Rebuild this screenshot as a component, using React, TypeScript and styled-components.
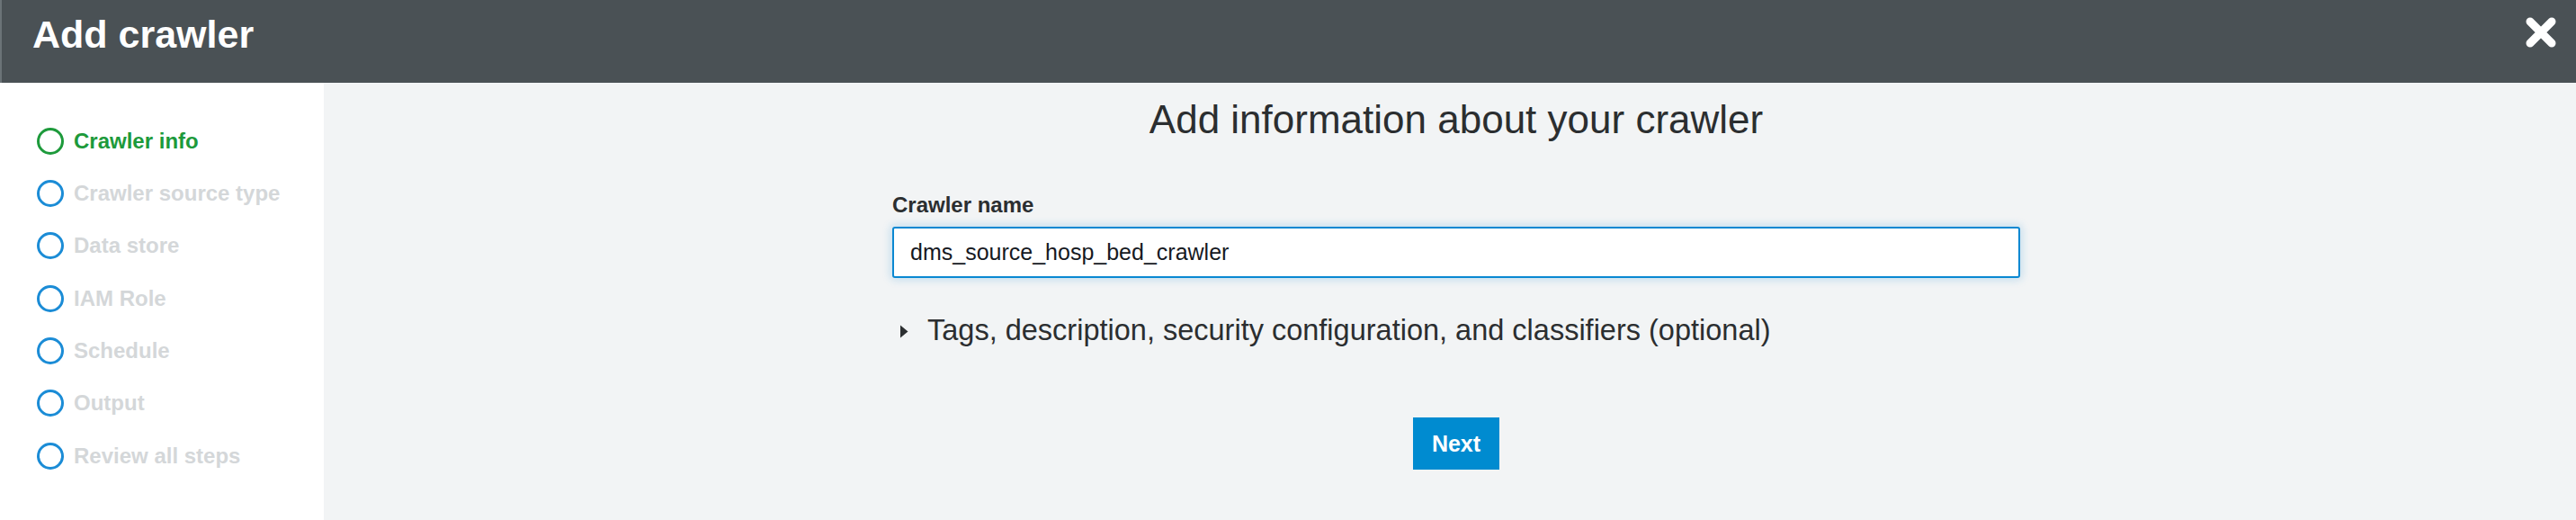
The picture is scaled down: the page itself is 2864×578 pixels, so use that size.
import React from "react";
import styled, { createGlobalStyle } from "styled-components";

const Global = createGlobalStyle`
  html, body { margin: 0; padding: 0; }
  body {
    font-family: "Liberation Sans", Arial, Helvetica, sans-serif;
    background: #ffffff;
  }
  * { box-sizing: border-box; }
`;

const Page = styled.div`
  display: flex;
  flex-direction: column;
  width: 2864px;
  height: 578px;
  overflow: hidden;
`;

const Header = styled.header`
  flex: 0 0 92px;
  height: 92px;
  display: flex;
  align-items: flex-start;
  justify-content: space-between;
  background: #4a5155;
  border-left: 2px solid #6b7377;
  padding: 13px 22px 0 34px;
`;

const HeaderTitle = styled.h1`
  margin: 0;
  font-size: 43px;
  line-height: 50px;
  font-weight: 700;
  color: #ffffff;
  letter-spacing: 0;
`;

const CloseButton = styled.button`
  margin-top: 6px;
  width: 34px;
  height: 34px;
  padding: 0;
  border: 0;
  background: transparent;
  display: flex;
  cursor: pointer;
`;

const Body = styled.div`
  flex: 1;
  display: flex;
  min-height: 0;
`;

const Sidebar = styled.nav`
  flex: 0 0 360px;
  background: #ffffff;
  display: flex;
  flex-direction: column;
  padding: 35.5px 0 0 41px;
`;

const Step = styled.div<{ $active?: boolean }>`
  height: 58.33px;
  display: flex;
  align-items: center;
  gap: 11px;
  font-size: 24px;
  font-weight: 700;
  color: ${(p) => (p.$active ? "#1d9a3b" : "#d4d7d9")};
  white-space: nowrap;
`;

const StepCircle = styled.span<{ $active?: boolean }>`
  flex: 0 0 30px;
  width: 30px;
  height: 30px;
  border-radius: 50%;
  border: 3px solid ${(p) => (p.$active ? "#1d9a3b" : "#1b8cd6")};
`;

const Main = styled.main`
  flex: 1;
  background: #f2f4f5;
  display: flex;
  flex-direction: column;
  align-items: center;
  padding: 15px 0 0 14px;
`;

const PageTitle = styled.h2`
  margin: 0;
  font-size: 44px;
  line-height: 52px;
  font-weight: 400;
  color: #2b2e30;
  text-align: center;
`;

const Form = styled.div`
  width: 1254px;
  display: flex;
  flex-direction: column;
  margin-top: 55px;
`;

const Label = styled.label`
  font-size: 24px;
  line-height: 28px;
  font-weight: 700;
  color: #2b2e30;
`;

const TextInput = styled.input`
  margin-top: 10px;
  height: 57px;
  width: 100%;
  border: 2px solid #0a88d2;
  border-radius: 3px;
  background: #ffffff;
  padding: 0 0 0 18px;
  font-family: "Liberation Sans", Arial, Helvetica, sans-serif;
  font-size: 25px;
  color: #16191f;
  outline: none;
  box-shadow: 0 0 10px 2px rgba(27, 139, 214, 0.22);
`;

const Expander = styled.div`
  margin-top: 38px;
  display: flex;
  align-items: center;
  gap: 21px;
  padding-left: 8px;
  font-size: 32.5px;
  line-height: 40px;
  color: #2b2e30;
  cursor: pointer;
`;

const Caret = styled.svg`
  flex: 0 0 10px;
  width: 10px;
  height: 15px;
  margin-top: 2px;
`;

const Actions = styled.div`
  display: flex;
  justify-content: center;
  margin-top: 77px;
`;

const PrimaryButton = styled.button`
  width: 96px;
  height: 58px;
  border: 0;
  border-radius: 0;
  background: #008bd0;
  color: #ffffff;
  font-family: "Liberation Sans", Arial, Helvetica, sans-serif;
  font-size: 25px;
  font-weight: 700;
  padding: 0;
  cursor: pointer;
`;

const steps = [
  "Crawler info",
  "Crawler source type",
  "Data store",
  "IAM Role",
  "Schedule",
  "Output",
  "Review all steps",
];

export default function App() {
  return (
    <>
      <Global />
      <Page>
        <Header>
          <HeaderTitle>Add crawler</HeaderTitle>
          <CloseButton aria-label="Close">
            <svg width="34" height="34" viewBox="0 0 34 34">
              <path
                d="M5 5 L29 29 M29 5 L5 29"
                stroke="#ffffff"
                strokeWidth="9"
                strokeLinecap="round"
              />
            </svg>
          </CloseButton>
        </Header>
        <Body>
          <Sidebar>
            {steps.map((s, i) => (
              <Step key={s} $active={i === 0}>
                <StepCircle $active={i === 0} />
                {s}
              </Step>
            ))}
          </Sidebar>
          <Main>
            <PageTitle>Add information about your crawler</PageTitle>
            <Form>
              <Label>Crawler name</Label>
              <TextInput defaultValue="dms_source_hosp_bed_crawler" />
              <Expander>
                <Caret viewBox="0 0 10 15">
                  <path d="M1 0.5 L9.5 7.5 L1 14.5 Z" fill="#2b2e30" />
                </Caret>
                Tags, description, security configuration, and classifiers (optional)
              </Expander>
              <Actions>
                <PrimaryButton>Next</PrimaryButton>
              </Actions>
            </Form>
          </Main>
        </Body>
      </Page>
    </>
  );
}
